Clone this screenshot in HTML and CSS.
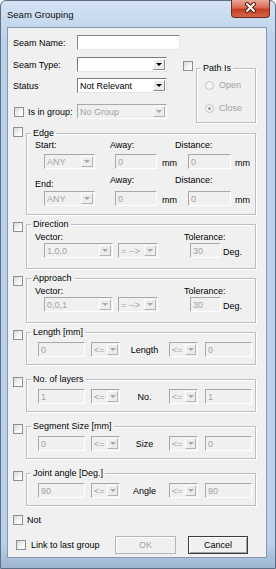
FILE: index.html
```html
<!DOCTYPE html>
<html lang="en">
<head>
  <meta charset="UTF-8">
  <title>Seam Grouping</title>
  <link rel="stylesheet" href="styles.css">
</head>
<body>
  <div class="window">
    <div class="titlebar">
      <span class="title">Seam Grouping</span>
      <span class="close-btn">
        <svg width="39" height="18" viewBox="0 0 39 18">
          <path d="M16 5 L23 12 M23 5 L16 12" stroke="#5a1d12" stroke-width="4" stroke-linecap="round" fill="none"/>
          <path d="M16 5 L23 12 M23 5 L16 12" stroke="#fff" stroke-width="2" stroke-linecap="round" fill="none"/>
        </svg>
      </span>
    </div>

    <div class="client">
      <div class="top">
        <div class="fields">
          <div class="field field-name">
            <label class="field-label">Seam Name:</label>
            <input class="text-input name-input" type="text">
          </div>
          <div class="field field-type">
            <label class="field-label">Seam Type:</label>
            <div class="combo combo-main"><span class="combo-text"></span><span class="combo-btn"></span></div>
          </div>
          <div class="field field-status">
            <label class="field-label">Status</label>
            <div class="combo combo-main"><span class="combo-text">Not Relevant</span><span class="combo-btn"></span></div>
          </div>
          <div class="field field-group">
            <label class="field-label"><input type="checkbox" class="check group-check">Is in group:</label>
            <div class="combo combo-main is-disabled"><span class="combo-text">No Group</span><span class="combo-btn"></span></div>
          </div>
        </div>

        <div class="path">
          <input type="checkbox" class="check">
          <fieldset class="group path-group">
            <legend>Path Is</legend>
            <div class="radio-row"><span class="radio"></span>Open</div>
            <div class="radio-row radio-close"><span class="radio checked"></span>Close</div>
          </fieldset>
        </div>
      </div>

      <!-- Edge -->
      <div class="group-row edge-row">
        <input type="checkbox" class="check">
        <fieldset class="group edge-group">
          <legend>Edge</legend>
          <div class="edge-labels">
            <span class="cell-a">Start:</span><span class="cell-b">Away:</span><span>Distance:</span>
          </div>
          <div class="edge-controls">
            <div class="cell-a"><div class="combo is-disabled any-combo"><span class="combo-text">ANY</span><span class="combo-btn"></span></div></div>
            <div class="cell-b"><input class="text-input is-disabled away-input" value="0" disabled><span class="unit">mm</span></div>
            <div class="cell-c"><input class="text-input is-disabled dist-input" value="0" disabled><span class="unit">mm</span></div>
          </div>
          <div class="edge-labels edge-labels-end">
            <span class="cell-a end-label">End:</span><span class="cell-b">Away:</span><span>Distance:</span>
          </div>
          <div class="edge-controls edge-controls-end">
            <div class="cell-a"><div class="combo is-disabled any-combo"><span class="combo-text">ANY</span><span class="combo-btn"></span></div></div>
            <div class="cell-b"><input class="text-input is-disabled away-input" value="0" disabled><span class="unit">mm</span></div>
            <div class="cell-c"><input class="text-input is-disabled dist-input" value="0" disabled><span class="unit">mm</span></div>
          </div>
        </fieldset>
      </div>

      <!-- Direction -->
      <div class="group-row">
        <input type="checkbox" class="check">
        <fieldset class="group vector-group">
          <legend>Direction</legend>
          <div class="vector-labels"><span class="vector-label">Vector:</span><span>Tolerance:</span></div>
          <div class="vector-controls">
            <div class="combo is-disabled vec-combo"><span class="combo-text">1,0,0</span><span class="combo-btn"></span></div>
            <div class="combo is-disabled arrow-combo"><span class="combo-text">= --&gt;</span><span class="combo-btn"></span></div>
            <input class="text-input is-disabled tol-input" value="30" disabled>
            <span class="unit">Deg.</span>
          </div>
        </fieldset>
      </div>

      <!-- Approach -->
      <div class="group-row">
        <input type="checkbox" class="check">
        <fieldset class="group vector-group">
          <legend>Approach</legend>
          <div class="vector-labels"><span class="vector-label">Vector:</span><span>Tolerance:</span></div>
          <div class="vector-controls">
            <div class="combo is-disabled vec-combo"><span class="combo-text">0,0,1</span><span class="combo-btn"></span></div>
            <div class="combo is-disabled arrow-combo"><span class="combo-text">= --&gt;</span><span class="combo-btn"></span></div>
            <input class="text-input is-disabled tol-input" value="30" disabled>
            <span class="unit">Deg.</span>
          </div>
        </fieldset>
      </div>

      <!-- Range groups -->
      <div class="group-row">
        <input type="checkbox" class="check">
        <fieldset class="group range-group">
          <legend>Length [mm]</legend>
          <div class="range-controls">
            <input class="text-input is-disabled range-input" value="0" disabled>
            <div class="combo is-disabled cmp-combo cmp-left"><span class="combo-text">&lt;=</span><span class="combo-btn"></span></div>
            <span class="range-label">Length</span>
            <div class="combo is-disabled cmp-combo"><span class="combo-text">&lt;=</span><span class="combo-btn"></span></div>
            <input class="text-input is-disabled range-input range-right" value="0" disabled>
          </div>
        </fieldset>
      </div>

      <div class="group-row spaced">
        <input type="checkbox" class="check">
        <fieldset class="group range-group">
          <legend>No. of layers</legend>
          <div class="range-controls">
            <input class="text-input is-disabled range-input" value="1" disabled>
            <div class="combo is-disabled cmp-combo cmp-left"><span class="combo-text">&lt;=</span><span class="combo-btn"></span></div>
            <span class="range-label">No.</span>
            <div class="combo is-disabled cmp-combo"><span class="combo-text">&lt;=</span><span class="combo-btn"></span></div>
            <input class="text-input is-disabled range-input range-right" value="1" disabled>
          </div>
        </fieldset>
      </div>

      <div class="group-row spaced">
        <input type="checkbox" class="check">
        <fieldset class="group range-group">
          <legend>Segment Size [mm]</legend>
          <div class="range-controls">
            <input class="text-input is-disabled range-input" value="0" disabled>
            <div class="combo is-disabled cmp-combo cmp-left"><span class="combo-text">&lt;=</span><span class="combo-btn"></span></div>
            <span class="range-label">Size</span>
            <div class="combo is-disabled cmp-combo"><span class="combo-text">&lt;=</span><span class="combo-btn"></span></div>
            <input class="text-input is-disabled range-input range-right" value="0" disabled>
          </div>
        </fieldset>
      </div>

      <div class="group-row spaced">
        <input type="checkbox" class="check">
        <fieldset class="group range-group">
          <legend>Joint angle [Deg.]</legend>
          <div class="range-controls">
            <input class="text-input is-disabled range-input" value="90" disabled>
            <div class="combo is-disabled cmp-combo cmp-left"><span class="combo-text">&lt;=</span><span class="combo-btn"></span></div>
            <span class="range-label">Angle</span>
            <div class="combo is-disabled cmp-combo"><span class="combo-text">&lt;=</span><span class="combo-btn"></span></div>
            <input class="text-input is-disabled range-input range-right" value="90" disabled>
          </div>
        </fieldset>
      </div>

      <div class="not-row">
        <input type="checkbox" class="check">
        <span>Not</span>
      </div>

      <div class="footer">
        <input type="checkbox" class="check link-check">
        <span class="link-label">Link to last group</span>
        <button class="btn ok-btn" disabled>OK</button>
        <button class="btn cancel-btn">Cancel</button>
      </div>
    </div>
  </div>
</body>
</html>
```

FILE: styles.css
```css
* { box-sizing: border-box; }
body { margin: 0; background: #fff; font-family: "Liberation Sans", Arial, sans-serif; font-size: 9px; color: #000; }

/* window frame */
.window { width: 276px; height: 569px; display: flex; flex-direction: column; padding: 0 8px 10px 6px; border: 1px solid #5d6f86; border-radius: 6px 6px 0 0; background: linear-gradient(#d3e2f3, #bcd2ea 40px, #bcd2ea 540px, #9fb6d0); }
.titlebar { height: 26px; display: flex; align-items: flex-start; justify-content: space-between; }
.title { margin-top: 8px; font-size: 9.5px; color: #111; }
.close-btn { width: 39px; height: 18px; margin: -1px -3px 0 0; border: 1px solid #6e2a1d; border-top: none; border-radius: 0 0 4px 4px; background: linear-gradient(#e9a99a, #d86a50 45%, #c43f22 55%, #d2654a); }
.close-btn svg { display: block; margin: -1px 0 0 -1px; }
.client { flex: 1; border: 1px solid #8799b0; background: #f0f0f0; padding: 7px 10px 0 5px; }

/* common controls */
.check { appearance: none; -webkit-appearance: none; margin: 0; width: 10px; height: 10px; flex: none; border: 1px solid #8e8f8f; background: linear-gradient(135deg, #d8d8d8, #fafafa 70%); }
.text-input { height: 15px; margin: 0; padding: 0 2px; border: 1px solid; border-color: #8a8a8a #e6e6e6 #e6e6e6 #8a8a8a; background: #fff; font: inherit; color: #000; }
.text-input.is-disabled { background: #f0f0f0; border-color: #a8a8a8 #fff #fff #a8a8a8; color: #a3a3a3; }
.combo { height: 15px; display: flex; align-items: center; justify-content: space-between; border: 1px solid; border-color: #7a7a7a #e6e6e6 #e6e6e6 #7a7a7a; background: #fff; }
.combo-text { padding-left: 2px; white-space: nowrap; overflow: hidden; }
.combo-btn { width: 12px; height: 11px; margin-right: 1px; display: flex; align-items: center; justify-content: center; border: 1px solid; border-color: #fff #8a8a8a #8a8a8a #fff; background: #ececec; }
.combo-btn::after { content: ""; border-top: 3px solid #000; border-left: 3px solid transparent; border-right: 3px solid transparent; }
.combo.is-disabled { background: #f0f0f0; border-color: #a8a8a8 #fff #fff #a8a8a8; color: #a3a3a3; }
.combo.is-disabled .combo-btn { border-color: #fff #b4b4b4 #b4b4b4 #fff; }
.combo.is-disabled .combo-btn::after { border-top-color: #a8a8a8; }
.unit { align-self: flex-end; line-height: 12px; }

/* group boxes */
.group { margin: 0; min-width: 0; border: 1px solid #b8bfc6; box-shadow: 1px 1px 0 #fff, inset 1px 1px 0 #fff; padding: 1px 2px 8px 8px; }
.group legend { margin-left: -4px; padding: 0 2px; line-height: 12px; }

/* top fields */
.top { display: flex; align-items: flex-start; }
.fields { width: 171px; }
.field { display: flex; align-items: center; height: 15px; }
.field-label { width: 64px; display: flex; align-items: center; white-space: nowrap; }
.field-type { margin-top: 7px; }
.field-status { margin-top: 6px; }
.field-group { margin-top: 11px; }
.group-check { margin: 0 4px 0 1px; }
.name-input { width: 103px; }
.combo-main { width: 90px; }

.path { display: flex; align-items: flex-start; margin-top: 26px; }
.path-group { width: 60px; margin: 1px 0 0 3px; padding: 5px 2px 8px 8px; color: #000; }
.radio-row { display: flex; align-items: center; height: 12px; color: #a3a3a3; }
.radio-close { margin-top: 11px; }
.radio { width: 9px; height: 9px; margin-right: 5px; border-radius: 50%; border: 1px solid #c4c4c4; background: #f4f4f4; display: flex; align-items: center; justify-content: center; }
.radio.checked::after { content: ""; width: 3px; height: 3px; border-radius: 50%; background: #9a9a9a; }

/* group rows */
.group-row { display: flex; align-items: flex-start; margin-top: 3px; }
.group-row.spaced { margin-top: 8px; }
.group-row .check { margin-top: 4px; }
.group-row .group { flex: 1; margin-left: 3px; }
.edge-row { margin-top: 4px; }
.edge-row .check { margin-top: 0; }

.edge-labels { display: flex; align-items: flex-start; line-height: 11px; }
.edge-labels-end { margin-top: 6px; }
.end-label { margin-top: 4px; }
.edge-controls { display: flex; margin-top: 3px; }
.edge-controls-end { margin-top: 1px; }
.cell-a { width: 75px; flex: none; }
.cell-b { width: 65px; flex: none; display: flex; }
.cell-c { display: flex; }
.any-combo { width: 51px; margin-left: 9px; }
.away-input { width: 42px; margin-left: 5px; }
.dist-input { width: 43px; margin-left: 13px; }
.cell-b .unit { margin-left: 5px; }
.cell-c .unit { margin-left: 4px; }

.vector-group { padding-top: 2px; padding-bottom: 10px; }
.vector-labels { display: flex; line-height: 11px; }
.vector-label { width: 149px; }
.vector-controls { display: flex; }
.vec-combo { width: 69px; margin-left: 9px; }
.arrow-combo { width: 40px; margin-left: 5px; }
.tol-input { width: 31px; margin-left: 32px; }
.vector-controls .unit { margin-left: 2px; line-height: 11px; }

.range-group { padding-top: 4px; padding-bottom: 7px; }
.range-controls { display: flex; align-items: center; }
.range-input { width: 47px; margin-left: 3px; }
.range-right { margin-left: 7px; }
.cmp-combo { width: 29px; }
.cmp-combo .combo-btn { width: 11px; }
.cmp-left { margin-left: 6px; }
.range-label { width: 49px; text-align: center; }

/* bottom */
.not-row { display: flex; align-items: center; gap: 4px; margin-top: 9px; height: 10px; }
.footer { display: flex; align-items: center; margin-top: 11px; }
.link-check { margin-left: 3px; }
.link-label { margin-left: 5px; }
.btn { height: 18px; margin: 0; padding: 0; font: inherit; background: #f0f0f0; }
.ok-btn { width: 61px; margin-left: auto; border: 1px solid #b5b5b5; box-shadow: inset 1px 1px 0 #fff; color: #a3a3a3; }
.cancel-btn { width: 60px; margin: 0 8px 0 12px; border: 1px solid #3c3c3c; box-shadow: inset 1px 1px 0 #fff, inset -1px -1px 0 #a0a0a0; color: #000; }
```
